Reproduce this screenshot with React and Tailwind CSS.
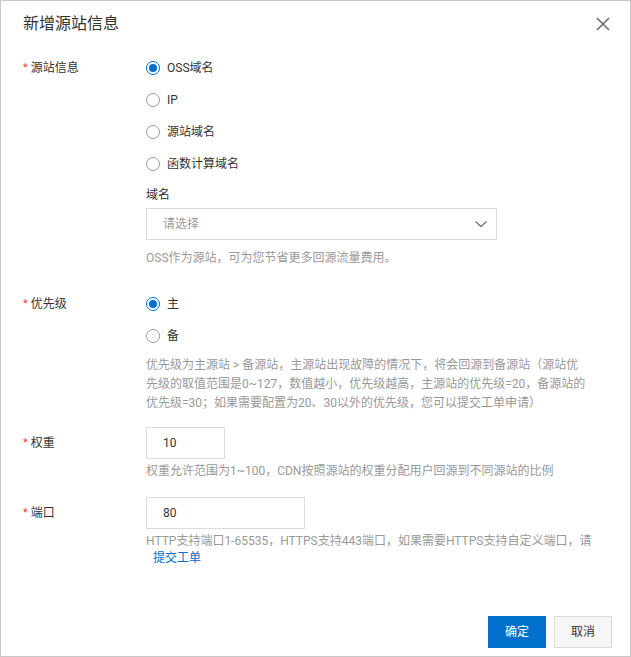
import React, { useState } from 'react';

const FONT = { fontFamily: '"Roboto", "Noto Sans CJK SC", sans-serif' };

const Radio = ({ checked, label, onClick }) => (
  <div className="h-[32px] flex items-center cursor-pointer" onClick={onClick}>
    <span
      className={`w-[14px] h-[14px] rounded-full border flex items-center justify-center ${
        checked ? 'border-[#0070cc]' : 'border-[#999]'
      }`}
    >
      {checked && <span className="w-[8px] h-[8px] rounded-full bg-[#0070cc]"></span>}
    </span>
    <span className="ml-[7px] text-[12px] text-[#333]">{label}</span>
  </div>
);

const Label = ({ children }) => (
  <div className="w-[123px] shrink-0 h-[32px] flex items-center text-[12px] text-[#333]">
    <span className="text-[#e8453c] mr-[3px] text-[11px]">*</span>
    {children}
  </div>
);

export default function App() {
  const [origin, setOrigin] = useState('oss');
  const [priority, setPriority] = useState('main');

  const origins = [
    { key: 'oss', label: 'OSS域名' },
    { key: 'ip', label: 'IP' },
    { key: 'domain', label: '源站域名' },
    { key: 'fc', label: '函数计算域名' },
  ];

  return (
    <div style={FONT} className="w-[631px] h-[657px] bg-white border border-[#c8c8c8] flex flex-col">
      <div className="h-[46px] px-[22px] flex items-center justify-between">
        <h2 className="text-[16px] text-[#333]">新增源站信息</h2>
        <svg width="16" height="16" viewBox="0 0 16 16" className="mr-[-3px]">
          <path d="M2 2 L14 14 M14 2 L2 14" stroke="#6b6b6b" strokeWidth="1.6" fill="none" />
        </svg>
      </div>

      <div className="px-[22px] pt-[5px]">
        <div className="flex">
          <Label>源站信息</Label>
          <div className="flex-1">
            {origins.map((o) => (
              <Radio key={o.key} checked={origin === o.key} label={o.label} onClick={() => setOrigin(o.key)} />
            ))}
            <div className="mt-[5px] leading-[20px] text-[12px] text-[#333]">域名</div>
            <div className="mt-[3px] w-[351px] h-[32px] border border-[#dcdcdc] flex items-center justify-between pl-[16px] pr-[8px]">
              <span className="text-[12px] text-[#999]">请选择</span>
              <svg width="14" height="14" viewBox="0 0 14 14">
                <path d="M1.5 4.5 L7 9.5 L12.5 4.5" stroke="#777" strokeWidth="1.3" fill="none" />
              </svg>
            </div>
            <p className="mt-[9px] leading-[18px] text-[12px] text-[#999]">OSS作为源站，可为您节省更多回源流量费用。</p>
          </div>
        </div>

        <div className="flex mt-[21px]">
          <Label>优先级</Label>
          <div className="flex-1">
            <Radio checked={priority === 'main'} label="主" onClick={() => setPriority('main')} />
            <Radio checked={priority === 'backup'} label="备" onClick={() => setPriority('backup')} />
            <p className="mt-[4px] leading-[19px] text-[12px] text-[#999] whitespace-nowrap">
              优先级为主源站 &gt; 备源站，主源站出现故障的情况下，将会回源到备源站（源站优
              <br />
              先级的取值范围是0~127，数值越小，优先级越高，主源站的优先级=20，备源站的
              <br />
              优先级=30；如果需要配置为20、30以外的优先级，您可以提交工单申请）
            </p>
          </div>
        </div>

        <div className="flex mt-[14px]">
          <Label>权重</Label>
          <div className="flex-1">
            <div className="w-[79px] h-[32px] border border-[#dcdcdc] flex items-center pl-[16px] text-[12px] text-[#333]">10</div>
            <p className="mt-[3px] leading-[18px] text-[12px] text-[#999]">权重允许范围为1~100，CDN按照源站的权重分配用户回源到不同源站的比例</p>
          </div>
        </div>

        <div className="flex mt-[17px]">
          <Label>端口</Label>
          <div className="flex-1">
            <div className="w-[159px] h-[32px] border border-[#dcdcdc] flex items-center pl-[16px] text-[12px] text-[#333]">80</div>
            <p className="mt-[4px] leading-[17px] text-[12px] text-[#999] w-[460px]">
              HTTP支持端口1-65535，HTTPS支持443端口，如果需要HTTPS支持自定义端口，请
              <a className="inline-block ml-[7px] text-[#0070cc] cursor-pointer">提交工单</a>
            </p>
          </div>
        </div>
      </div>

      <div className="mt-auto flex justify-end gap-[8px] pr-[18px] pb-[8px]">
        <button className="w-[58px] h-[32px] bg-[#0070cc] text-white text-[12px]">确定</button>
        <button className="w-[58px] h-[32px] bg-[#f7f7f7] border border-[#dcdcdc] text-[#333] text-[12px]">取消</button>
      </div>
    </div>
  );
}
